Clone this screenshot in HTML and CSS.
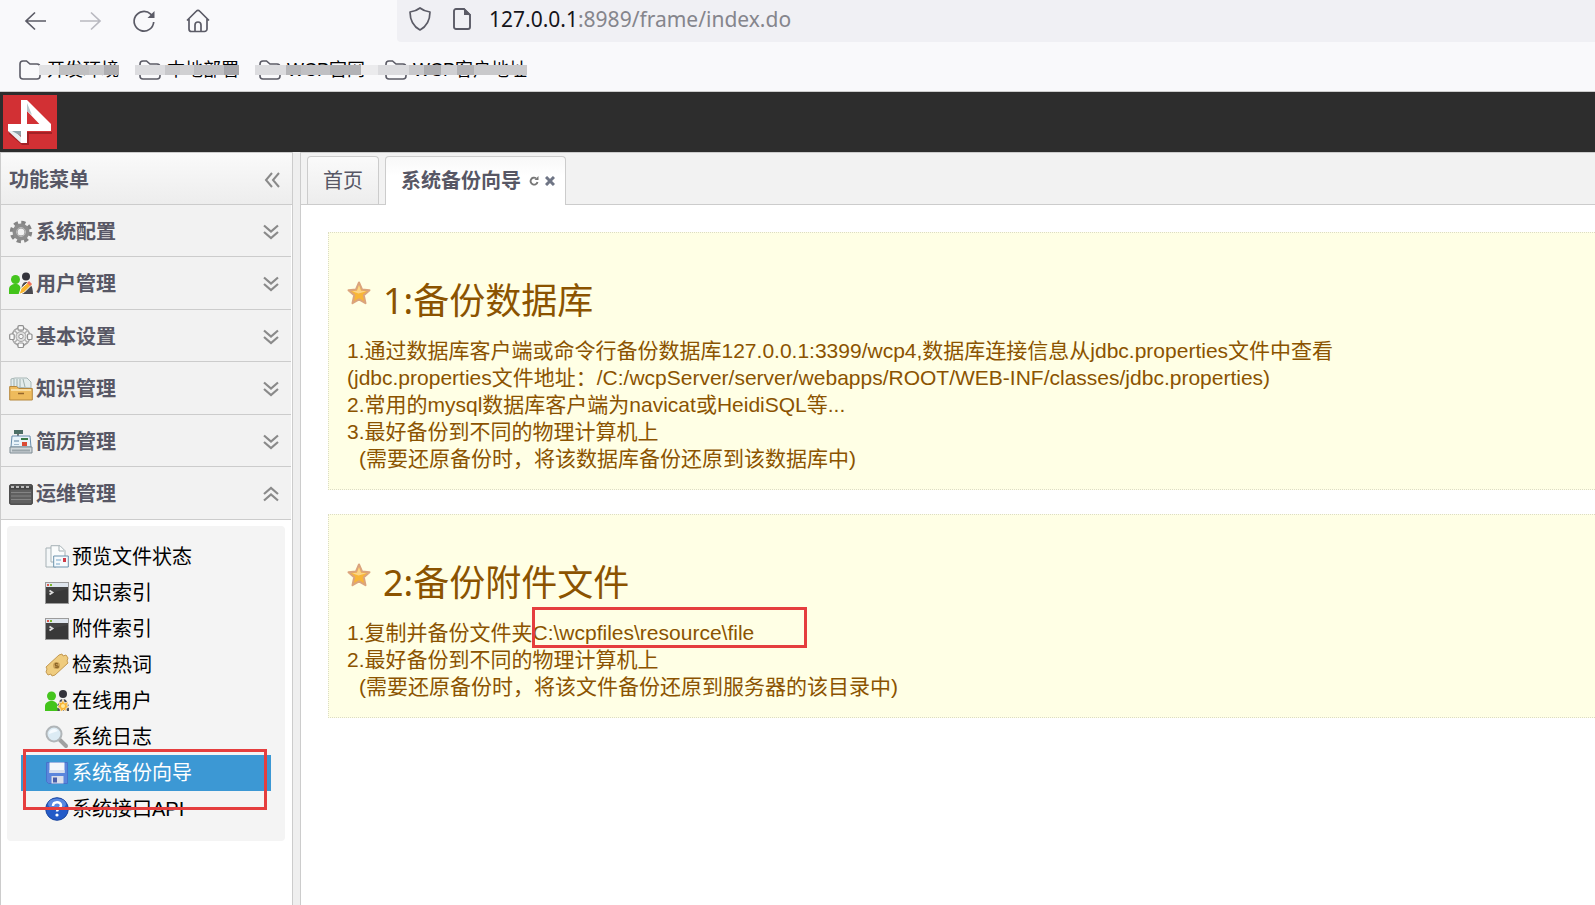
FILE: index.html
```html
<!DOCTYPE html>
<html lang="zh-CN">
<head>
<meta charset="utf-8">
<title>系统备份向导</title>
<link rel="stylesheet" href="styles.css">
</head>
<body>
<svg class="defs" aria-hidden="true">
  <defs>
    <symbol id="folder" viewBox="0 0 22 20"><path d="M1 4a3 3 0 0 1 3-3h3.500l3.500 3h7a3 3 0 0 1 3 3v9a3 3 0 0 1-3 3H4a3 3 0 0 1-3-3z" fill="none" stroke="#5b5b66" stroke-width="1.600"/></symbol>
    <symbol id="down" viewBox="0 0 16 16"><path d="M1 1.500l7 6 7-6M1 8l7 6 7-6" fill="none" stroke="#8a8a8a" stroke-width="2.200"/></symbol>
    <symbol id="terminal" viewBox="0 0 24 22"><rect x=".5" y=".5" width="23" height="21" fill="#434343" stroke="#9b9b9b"/><path d="M1 1h22v4H1z" fill="#dfe6ee"/><path d="M2 2h2v2H2z" fill="#e05a4a"/><path d="M5 2h2v2H5z" fill="#7cb82f"/><path d="M1 12L23 7v14H1z" fill="#2f2f2f" opacity=".5"/><path d="M4.500 8.500l3 2-3 2" fill="none" stroke="#ddd" stroke-width="1.800"/></symbol>
    <symbol id="star" viewBox="0 0 24 24"><path d="M12 1.500l3 7 7.500.7-5.700 5 1.700 8L12 18.300 5.500 22.200l1.700-8-5.700-5L9 8.500z" fill="#f8b637" stroke="#dba47c" stroke-width="2" stroke-linejoin="round"/><path d="M12 4l2 5.700 5.500.5-8 2.300-6.500-2.300 5-.5z" fill="#fbd588"/></symbol>
  </defs>
</svg>

<nav class="toolbar" aria-label="浏览器导航">
  <div class="nav-buttons">
    <button aria-label="后退"><svg viewBox="0 0 24 24"><path d="M22 12H2M11 3.500L2 12l9 8.500" fill="none" stroke="#5b5b66" stroke-width="1.700"/></svg></button>
    <button aria-label="前进"><svg viewBox="0 0 24 24"><path d="M2 12h20M13 3.500l9 8.500-9 8.500" fill="none" stroke="#b9b9c0" stroke-width="1.700"/></svg></button>
    <button aria-label="刷新"><svg viewBox="0 0 24 24"><path d="M21.700 13a9.800 9.800 0 1 1-3-7.800L20 6.500" fill="none" stroke="#5b5b66" stroke-width="1.700"/><path d="M22.500 2v7h-7z" fill="#5b5b66"/></svg></button>
    <button aria-label="主页"><svg viewBox="0 0 24 24"><path d="M1 11.500L10.500 2a2 2 0 0 1 3 0l9.500 9.500M3 10v10a2.500 2.500 0 0 0 2.500 2.500h13A2.500 2.500 0 0 0 21 20V10M9 22v-6a3 3 0 0 1 6 0v6" fill="none" stroke="#5b5b66" stroke-width="1.700"/></svg></button>
  </div>
  <div class="address">
    <svg class="shield" viewBox="0 0 22 24"><path d="M11 1c3 2.500 6 3.500 10 4-.1 8-2.500 14-10 18C3.500 19 1.100 13 1 5c4-.5 7-1.500 10-4z" fill="none" stroke="#5b5b66" stroke-width="1.700" stroke-linejoin="round"/></svg>
    <svg class="page" viewBox="0 0 18 22"><path d="M3 1h8l6 6v12a2 2 0 0 1-2 2H3a2 2 0 0 1-2-2V3a2 2 0 0 1 2-2z" fill="none" stroke="#5b5b66" stroke-width="1.900"/><path d="M11 0v7h7z" fill="#5b5b66"/></svg>
    <span class="url"><b>127.0.0.1</b>:8989/frame/index.do</span>
  </div>
</nav>
<nav class="bookmarks" aria-label="书签">
  <a href="#"><svg><use href="#folder"/></svg>开发环境<i class="smear s1"></i></a>
  <a href="#"><svg><use href="#folder"/></svg>本地部署<i class="smear s2"></i></a>
  <a href="#"><svg><use href="#folder"/></svg>WCP官网<i class="smear s3"></i></a>
  <a href="#"><svg><use href="#folder"/></svg>WCP客户地址<i class="smear s4"></i></a>
</nav>

<header class="banner">
  <svg class="logo" viewBox="0 0 54 54"><path d="M0 0h54v54H0z" fill="#d23034"/><path d="M6 37h43v2H26v11h-7l-13-11z" fill="#8f1b1f" opacity=".7"/><path d="M5 36l13 12v-6l-6-6z" fill="#e8eef0"/><path d="M9 36h9v5z" fill="#8fa3aa"/><path d="M18 5h6v43h-6z" fill="#fff"/><path d="M24 5l24 24v6h-6L24 16z" fill="#fff"/><path d="M24 8l5 12-5-4z" fill="#b9c5ca"/><path d="M5 29h43v7H5z" fill="#fff"/></svg>
</header>

<div class="workspace">
  <aside class="sidebar">
    <div class="side-title">功能菜单<button aria-label="折叠"><svg viewBox="0 0 16 16"><path d="M8 1L2 8l6 7M15 1L9 8l6 7" fill="none" stroke="#8a8a8a" stroke-width="2"/></svg></button></div>
    <div class="accordion">
      <button><svg class="icon" viewBox="0 0 24 24"><circle cx="12" cy="12" r="9.500" fill="none" stroke="#858585" stroke-width="3.500" stroke-dasharray="4.200 3.260"/><circle cx="12" cy="12" r="6" fill="none" stroke="#8d8d8d" stroke-width="5"/><circle cx="12" cy="12" r="4.500" fill="none" stroke="#bcbcbc"/></svg>系统配置<svg class="arrow"><use href="#down"/></svg></button>
      <button><svg class="icon" viewBox="0 0 24 24"><circle cx="17" cy="4.500" r="4" fill="#34343c"/><path d="M12 22c0-9 2-12 5-12s7 3 7 12z" fill="#4a4a50"/><circle cx="6.500" cy="7.500" r="4.500" fill="#45c51e"/><path d="M0 22v-5c0-3 3-5 6.500-5s5 2 5 5v5z" fill="#43c41b"/><path d="M10 22.500l2-6 8-7 3 3-8 8z" fill="#f8b42c" stroke="#fff"/><path d="M18 11l2-2 3 3-2 2z" fill="#ef7060"/></svg>用户管理<svg class="arrow"><use href="#down"/></svg></button>
      <button><svg class="icon" viewBox="0 0 24 24"><circle cx="12" cy="11.500" r="9" fill="#f6f6f6" stroke="#a4a4a4" stroke-width="1.500"/><g fill="#fafafa" stroke="#8f8f8f" stroke-width="1.200"><rect x="9" y=".7" width="5.500" height="4.500" rx="1"/><rect x="9" y="18" width="5.500" height="4.500" rx="1"/><rect x=".7" y="9" width="4.500" height="5.500" rx="1"/><rect x="18.500" y="9" width="4.500" height="5.500" rx="1"/></g><path d="M5 5l4 4M19 5l-4 4M5 18l4-4M19 18l-4-4" stroke="#b0b0b0" stroke-width="1.500"/><circle cx="12" cy="11.500" r="5" fill="#dedede" stroke="#a4a4a4"/><circle cx="12" cy="11.500" r="2.200" fill="#f8f8f8" stroke="#999"/></svg>基本设置<svg class="arrow"><use href="#down"/></svg></button>
      <button><svg class="icon" viewBox="0 0 24 24"><path d="M2 10V2l4-1h12l4 4v6z" fill="#e3ecec" stroke="#a7b6b5"/><path d="M5 2v8M8 2v8M11 2v8M14 2l2 8" stroke="#9db0ad"/><path d="M.7 9.500h7l2 2H23.300V23H.7z" fill="#eebb5c" stroke="#b6873c"/><path d="M2 13h20" stroke="#f9dda0" stroke-width="2"/><path d="M9 16.500h6" stroke="#95662b" stroke-width="1.500"/></svg>知识管理<svg class="arrow"><use href="#down"/></svg></button>
      <button><svg class="icon" viewBox="0 0 24 24"><path d="M5 0h9v4H5z" fill="#4d6f66"/><path d="M8 4h2v3H8z" fill="#777"/><path d="M3 6h18l1 11H2z" fill="#e9f3fa" stroke="#6a8fae"/><path d="M1 17h22v6H1z" fill="#cfd6da" stroke="#7d8a92"/><path d="M5 10h5v2H5zM5 14h5v1H5z" fill="#a1bace"/><path d="M12 8h7v2h-7z" fill="#397a45"/><path d="M13 12h5v4h-5z" fill="#db4a35"/><path d="M3 20.500h18" stroke="#9aa5aa" stroke-width="2"/></svg>简历管理<svg class="arrow"><use href="#down"/></svg></button>
      <button><svg class="icon" viewBox="0 0 24 24"><rect x=".7" y="2.700" width="22.600" height="19.600" rx="1" fill="#606060" stroke="#343434"/><path d="M1 6h22" stroke="#444" stroke-width="3"/><path d="M2 5h20" stroke="#bbb" stroke-width="2" stroke-dasharray="3 2"/><path d="M2 10.500h20M2 14h20M2 17.500h20" stroke="#858585"/></svg>运维管理<svg class="arrow up"><use href="#down"/></svg></button>
    </div>
    <ul class="tree">
      <li><a href="#"><svg class="icon" viewBox="0 0 24 24"><path d="M1 3h10v19H1z" fill="#f4f7f8" stroke="#a6b1b5"/><path d="M6 .7h9l5 5V17H6z" fill="#fafcfc" stroke="#a6b1b5"/><path d="M14 1v5h5" fill="none" stroke="#a6b1b5"/><path d="M8.700 11h14.600v11H8.700z" fill="#f6fafd" stroke="#6c93ad"/><path d="M11 15h5M11 19h4" stroke="#78a8ca"/><path d="M18 13h3v4h-3z" fill="#d03945"/></svg>预览文件状态</a></li>
      <li><a href="#"><svg class="icon"><use href="#terminal"/></svg>知识索引</a></li>
      <li><a href="#"><svg class="icon"><use href="#terminal"/></svg>附件索引</a></li>
      <li><a href="#"><svg class="icon" viewBox="0 0 24 24"><path d="M14 2l3-1 1 2 3-1 2 3-1 3 1 2L10 22l-3 1-1-2-3 1-2-3 1-3-1-2z" fill="#efcc7f" stroke="#c49a52"/><circle cx="11.500" cy="12.500" r="3.500" fill="#cda45a"/><path d="M13 11c-4-2-3 2-1 2s2 3-2 1" fill="none" stroke="#8c6528" stroke-width="1.300"/></svg>检索热词</a></li>
      <li><a href="#"><svg class="icon" viewBox="0 0 24 24"><circle cx="18" cy="5" r="4" fill="#34343c"/><path d="M12 22c0-9 3-12 6-12s6 3 6 12z" fill="#4a4a50"/><circle cx="6.500" cy="7" r="4.500" fill="#45c51e"/><path d="M0 22v-5c0-3 3-5 6.500-5s6 2 6 5v5z" fill="#43c41b"/><path d="M18 10l1.500 4 4-1.500-1.500 4 2 1.500-3 1.500.5 3-3-1.500-3 2-.5-3.500-3-1.500 2.500-2-1.500-3.500 3.500 1z" fill="#f9b637" stroke="#fff" stroke-width=".8"/><circle cx="18" cy="17" r="2" fill="#ffe99d"/></svg>在线用户</a></li>
      <li><a href="#"><svg class="icon" viewBox="0 0 24 24"><path d="M15 15l6 6" stroke="#a0a0a0" stroke-width="4" stroke-linecap="round"/><circle cx="9" cy="9" r="7.500" fill="#dcebf4" stroke="#b0b5b8" stroke-width="2"/><path d="M4 9a5 5 0 0 1 9-3z" fill="#f6fbff"/></svg>系统日志</a></li>
      <li class="selected"><a href="#"><svg class="icon" viewBox="0 0 24 24"><path d="M1.500 1.500h21v21H3.500l-2-2z" fill="#5b86dc" stroke="#4672cb"/><path d="M4.500 1.500h15V12h-15z" fill="#f3f6fb"/><path d="M4.500 9h15v3h-15z" fill="#d9e1ee"/><path d="M6.500 15h12v7.500h-12z" fill="#dadfeb"/><path d="M8 16.500h4v5H8z" fill="#4a5fa8"/></svg>系统备份向导</a></li>
      <li><a href="#"><svg class="icon" viewBox="0 0 24 24"><circle cx="12" cy="12" r="11.300" fill="#245bc8" stroke="#1c479e"/><ellipse cx="12" cy="7" rx="9" ry="5.500" fill="#709bea" opacity=".7"/><path d="M8 9c0-5 8-5 8-.5 0 3-4 3-4 6" fill="none" stroke="#fff" stroke-width="2.500"/><circle cx="12" cy="18" r="1.600" fill="#fff"/></svg>系统接口API</a></li>
    </ul>
    <div class="mark mark-menu"></div>
  </aside>

  <main class="main">
    <div class="tabs" role="tablist">
      <button class="tab" role="tab">首页</button>
      <div class="tab active" role="tab">系统备份向导
        <button aria-label="刷新标签"><svg viewBox="0 0 10 10"><path d="M8.500 6A3.500 3.500 0 1 1 7 2.200" fill="none" stroke="#777" stroke-width="1.900"/><path d="M5.500 4h4V0z" fill="#777"/></svg></button>
        <button aria-label="关闭标签"><svg viewBox="0 0 10 10"><path d="M1 1l8 8M9 1L1 9" stroke="#6f7585" stroke-width="3"/></svg></button>
      </div>
    </div>
    <div class="content">
      <section class="tip">
        <h1><svg><use href="#star"/></svg>1:备份数据库</h1>
        <p>1.通过数据库客户端或命令行备份数据库127.0.0.1:3399/wcp4,数据库连接信息从jdbc.properties文件中查看</p>
        <p>(jdbc.properties文件地址：/C:/wcpServer/server/webapps/ROOT/WEB-INF/classes/jdbc.properties)</p>
        <p>2.常用的mysql数据库客户端为navicat或HeidiSQL等...</p>
        <p>3.最好备份到不同的物理计算机上</p>
        <p class="note">(需要还原备份时，将该数据库备份还原到该数据库中)</p>
      </section>
      <section class="tip">
        <h1><svg><use href="#star"/></svg>2:备份附件文件</h1>
        <p>1.复制并备份文件夹<span class="path">C:\wcpfiles\resource\file<span class="mark mark-path"></span></span></p>
        <p>2.最好备份到不同的物理计算机上</p>
        <p class="note">(需要还原备份时，将该文件备份还原到服务器的该目录中)</p>
      </section>
    </div>
  </main>
</div>
</body>
</html>
```
FILE: styles.css
```css
* { box-sizing: border-box; }
body {
  margin: 0;
  height: 100vh;
  display: flex;
  flex-direction: column;
  overflow: hidden;
  background: #fff;
  color: #000;
  font: 20px/24px "Liberation Sans", "Noto Sans CJK SC", sans-serif;
}
button { margin: 0; padding: 0; border: 0; background: none; color: inherit; font: inherit; }
a { color: inherit; text-decoration: none; }
svg { display: block; flex: none; }
.defs { position: absolute; width: 0; height: 0; }

.toolbar { display: flex; height: 42px; background: #f9f9fb; flex: none; }
.nav-buttons { display: flex; gap: 30px; width: 397px; padding: 8px 24px; }
.nav-buttons svg { width: 24px; height: 24px; }
.address {
  flex: 1;
  display: flex;
  align-items: center;
  padding: 0 12px 4px;
  background: #f0f0f4;
  border-radius: 0 0 0 4px;
}
.shield { width: 22px; height: 24px; }
.page { width: 18px; height: 22px; margin: 0 18px 0 22px; }
.url { color: #85858c; font: 21px/24px "Noto Sans", sans-serif; }
.url b { color: #15141a; font-weight: normal; }

.bookmarks {
  display: flex;
  flex: none;
  gap: 20px;
  height: 50px;
  padding: 16px 19px 0;
  background: #f9f9fb;
  border-bottom: 1px solid #ccc;
  font-size: 18px;
}
.bookmarks a { position: relative; display: flex; gap: 6px; height: 24px; align-items: center; white-space: nowrap; }
.bookmarks svg { width: 22px; height: 20px; }
.smear { position: absolute; top: 7px; height: 10px; }
.s1 { left: 20px; right: 0; background: linear-gradient(90deg, #e2e2e4 25%, #c0c0c2 25% 62%, #c8c8ca 62% 81%, #aeaeb1 81%); }
.s2 { left: -4px; right: 0; background: linear-gradient(90deg, #dcdcdf 29%, #c8c8cb 29% 43%, #d0d0d2 43% 57%, #bfbfc2 57% 86%, #a5a5a9 86%); }
.s3 { left: -4px; right: 4px; background: linear-gradient(90deg, #dcdcdf 29%, #b6b6b9 29% 43%, #c0c0c3 43% 71%, #b2b2b5 71%); }
.s4 { left: -24px; right: 0; background: linear-gradient(90deg, #ebebed 10%, #dcdcdf 10% 29%, #c8c8cb 29% 38%, #adadb0 38% 48%, #cfcfd2 48% 58%, #b2b2b5 58% 68%, #c9c9cb 68%); }

.banner { height: 60px; flex: none; padding: 3px; background: #2d2d2d; }
.logo { width: 54px; height: 54px; }

.workspace { flex: 1; display: flex; min-height: 0; background: #efefef; }
.sidebar {
  position: relative;
  width: 293px;
  flex: none;
  background: #fff;
  border: 1px solid #ccc;
  border-width: 1px 1px 0;
}
.side-title, .accordion button {
  display: flex;
  align-items: center;
  width: 100%;
  height: 52px;
  padding: 2px 12px 0 8px;
  border-bottom: 1px solid #ccc;
  color: #575765;
  font-weight: bold;
}
.side-title { justify-content: space-between; background: linear-gradient(#fafafa, #ededed); }
.side-title svg, .arrow { width: 16px; height: 16px; }
.accordion { padding-right: 1px; }
.accordion button { gap: 3px; background: #f2f2f2; }
.accordion button:nth-child(even) { height: 53px; }
.icon { width: 24px; height: 24px; }
.arrow { margin-left: auto; }
.up { transform: rotate(180deg); }

.tree { margin: 6px 7px 6px 6px; padding: 13px 14px 14px; list-style: none; background: #f4f4f4; border-radius: 4px; }
.tree a { display: flex; align-items: center; gap: 3px; height: 36px; padding-left: 24px; }
.selected { background: #3c98d4; color: #fff; }
.mark { position: absolute; border: 3px solid #e53e3e; }
.mark-menu { left: 22px; top: 596px; width: 244px; height: 61px; }

.main { flex: 1; min-width: 0; margin-left: 7px; border-left: 1px solid #ccc; background: #fff; }
.tabs {
  display: flex;
  gap: 6px;
  height: 53px;
  padding: 3px 6px 0;
  background: #f2f2f2;
  border: 1px solid #ccc;
  border-width: 1px 0;
}
.tab {
  display: flex;
  align-items: center;
  gap: 6px;
  padding: 0 15px;
  color: #575765;
  background: linear-gradient(#fafafa, #ededed);
  border: 1px solid #ccc;
  border-bottom: 0;
  border-radius: 4px 4px 0 0;
}
.active { height: 49px; margin-bottom: -1px; padding: 0 10px 0 15px; background: linear-gradient(#f8f8f8, #fff 40%); font-weight: bold; box-shadow: 0 1px #fff; }
.active svg { width: 10px; height: 10px; }
.active button:first-of-type { margin-left: 2px; }

.content { display: grid; gap: 24px; padding: 27px 0 0 27px; }
.tip {
  padding: 44px 18px 17px;
  color: #8b5300;
  background: #ffffe5;
  border: 1px dotted #dcdcc4;
  border-right: 0;
  font-size: 21px;
  line-height: 27px;
}
.tip h1 { display: flex; gap: 12px; margin: 0 0 12px; font: 36px/48px "Noto Sans", "Noto Sans CJK SC", sans-serif; }
.tip h1 svg { width: 24px; height: 24px; margin-top: 4px; }
.tip p { margin: 0; white-space: nowrap; }
.tip .note { padding-left: 12px; }
.path { position: relative; }
.mark-path { left: -1px; top: -14px; width: 275px; height: 41px; }
```
